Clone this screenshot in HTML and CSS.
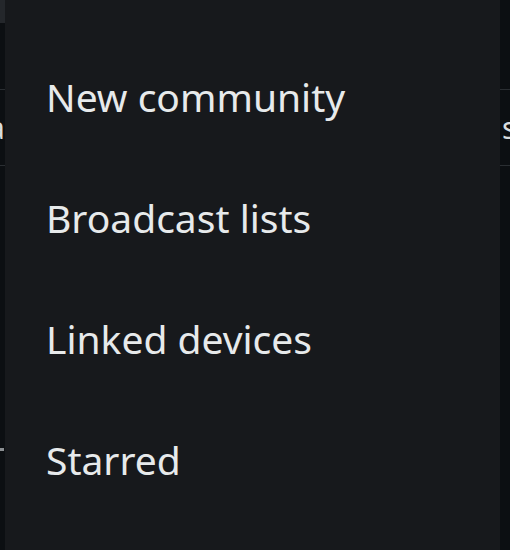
FILE: index.html
```html
<!DOCTYPE html>
<html lang="en">
<head>
    <meta charset="UTF-8">
    <meta name="viewport" content="width=device-width, initial-scale=1.0">
    <title>Menu</title>
    <link rel="stylesheet" href="styles.css">
</head>
<body>
    <div class="screen">
        <div class="edge edge-left">
            <div class="edge-top"></div>
            <div class="edge-row"><span class="peek peek-left">a</span></div>
            <div class="edge-rest"><span class="peek-mark"></span></div>
        </div>

        <div class="menu">
            <div class="menu-item">New community</div>
            <div class="menu-item">Broadcast lists</div>
            <div class="menu-item">Linked devices</div>
            <div class="menu-item">Starred</div>
        </div>

        <div class="edge edge-right">
            <div class="edge-top"></div>
            <div class="edge-row"><span class="peek peek-right">s</span></div>
            <div class="edge-rest"></div>
        </div>
    </div>
</body>
</html>
```

FILE: styles.css
```css
* {
    margin: 0;
    padding: 0;
    box-sizing: border-box;
    font-family: 'Noto Sans', 'Open Sans', sans-serif;
}

body {
    background-color: #0c0f12;
    color: #e7eaeb;
    width: 510px;
    height: 550px;
    overflow: hidden;
}

.screen {
    display: flex;
    height: 550px;
}

.edge {
    display: flex;
    flex-direction: column;
    overflow: hidden;
}

.edge-left {
    width: 5px;
}

.edge-right {
    width: 10px;
}

.edge-top {
    height: 89px;
}

.edge-left .edge-top {
    background: linear-gradient(#24272b 0, #24272b 23px, transparent 23px);
}

.edge-row {
    height: 77px;
    border-top: 1px solid #2a2e32;
    border-bottom: 1px solid #2a2e32;
    display: flex;
    align-items: center;
}

.edge-rest {
    flex: 1;
    position: relative;
}

.peek {
    font-size: 30px;
    line-height: 1;
    color: #d8dcde;
    flex: none;
}

.peek-left {
    margin-left: -12px;
}

.peek-right {
    margin-left: 2px;
}

.peek-mark {
    position: absolute;
    left: 0;
    top: 282px;
    width: 4px;
    height: 3px;
    background-color: #8b8f92;
}

.menu {
    flex: 1;
    background-color: #17191c;
    padding-top: 36px;
    padding-left: 41px;
}

.menu-item {
    height: 121px;
    line-height: 121px;
    font-size: 39px;
    white-space: nowrap;
}
```
